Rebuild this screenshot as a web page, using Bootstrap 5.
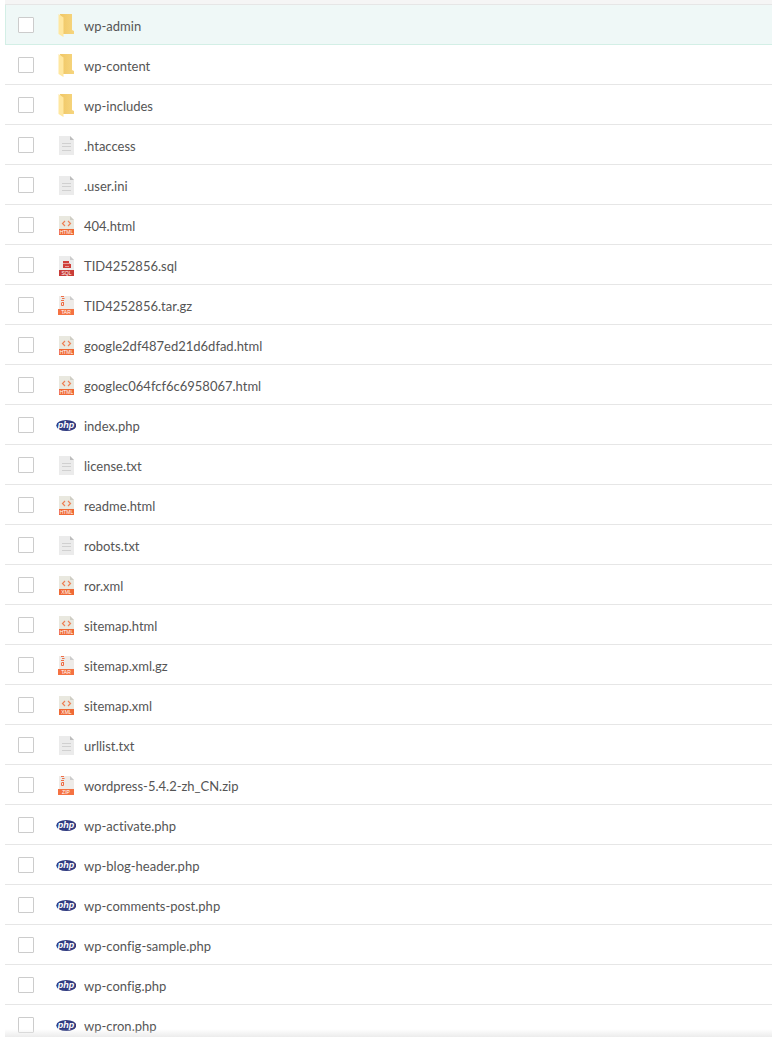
<!DOCTYPE html>
<html lang="en">
<head>
<meta charset="utf-8">
<meta name="viewport" content="width=device-width, initial-scale=1">
<title>Files</title>
<link href="https://cdn.jsdelivr.net/npm/bootstrap@5.3.0/dist/css/bootstrap.min.css" rel="stylesheet">
<style>
body{font-family:Lato,"Noto Sans CJK SC",sans-serif;font-size:13px;line-height:20px;font-variant-ligatures:none;color:#555;background:#fff}
.file-pane{margin-left:5px;max-height:calc(100vh - 11px)}
.pane-head{height:4px;background:#f5f5f5;margin-left:-5px}
.pane-fade{height:8px;background:linear-gradient(#fff0,#ececec)}
.file-list{border-top:1px solid #e6e6e6}
.file-row{height:40px;padding-left:13px;border-bottom:1px solid #e6e6e6}
.file-row.hovered{background:#eff8f7;border-bottom-color:#d3efe6;box-shadow:inset 1px 0 #d3efe6}
.file-row .form-check-input{width:16px;height:16px;margin:0 22px 0 0;border:1px solid #ccc;border-radius:1px;background-color:#fff;flex:none}
.file-row label{padding-top:2px}
.file-icon{width:20px;height:24px;margin-right:8px;flex:none}
.file-icon text{fill:#fff;text-anchor:middle;font-family:"Liberation Sans",sans-serif;font-size:5px}
.file-icon .php-word{font-size:9px;font-weight:700;font-style:italic}
</style>
</head>
<body>
<svg width="0" height="0" class="position-absolute" aria-hidden="true">
<defs><linearGradient id="gold"><stop offset="0" stop-color="#f0c766"/><stop offset="1" stop-color="#f6d57e"/></linearGradient></defs>
<symbol id="folder" viewBox="0 0 20 24"><path d="M4 1h12v16l2 1v3H6z" fill="url(#gold)"/><path d="M2.500 1 7.500 4.500V24l-5-3z" fill="#ffe7a0"/></symbol>
<symbol id="txt" viewBox="0 0 20 24"><path d="M3 3h11l4 4v15H3z" fill="#ebebeb"/><path d="M14 3v4h4z" fill="#bdbdbd"/><path d="M6 10.500h9M6 13.500h9M6 17.500h9" stroke="#d0d0d0"/></symbol>
<symbol id="code" viewBox="0 0 20 24"><path d="M3 3h11l4 4v10H3z" fill="#e9e8df"/><path d="M14 3v4h4z" fill="#cfcec5"/><path d="M9 8 6.500 10.500 9 13M12 8l2.500 2.500L12 13" fill="none" stroke="#ee8156" stroke-width="1.200"/><path d="M3 16h15v6H3z" fill="#f06a35"/></symbol>
<symbol id="sql" viewBox="0 0 20 24"><path d="M3 3h11l4 4v10H3z" fill="#ececec"/><path d="M14 3v4h4z" fill="#ccc"/><path d="M7 8h6v2H7zM7 11h8v4H7z" fill="#cf3e39"/><path d="M7 10.500h7M9 13.500h4" stroke="#e5a09c"/><path d="M3 17h15v6H3z" fill="#c93d38"/></symbol>
<symbol id="arch" viewBox="0 0 20 24"><path d="M3 3h11l4 4v10H3z" fill="#eeebe8"/><path d="M14 3v4h4z" fill="#ccc"/><path d="M5 3.500h3M6 5.500h2.500M5 7.500h3M6 9.500h2" stroke="#ef6f48" stroke-width="1.200"/><path d="M5.500 9.500v3h2v-3" fill="none" stroke="#ef6f48"/><path d="M2 16h16v6H2z" fill="#f57242"/></symbol>
<symbol id="php" viewBox="0 0 20 24"><ellipse cx="10.300" cy="12.500" rx="10" ry="5.500" fill="#303b80"/></symbol>
</svg>
<main class="file-pane position-relative overflow-hidden">
<div class="pane-head"></div>
<ul class="file-list list-unstyled mb-0">
<li class="file-row hovered d-flex align-items-center"><input class="form-check-input" type="checkbox" id="f1"><svg class="file-icon"><use href="#folder"/></svg><label for="f1">wp-admin</label></li>
<li class="file-row d-flex align-items-center"><input class="form-check-input" type="checkbox" id="f2"><svg class="file-icon"><use href="#folder"/></svg><label for="f2">wp-content</label></li>
<li class="file-row d-flex align-items-center"><input class="form-check-input" type="checkbox" id="f3"><svg class="file-icon"><use href="#folder"/></svg><label for="f3">wp-includes</label></li>
<li class="file-row d-flex align-items-center"><input class="form-check-input" type="checkbox" id="f4"><svg class="file-icon"><use href="#txt"/></svg><label for="f4">.htaccess</label></li>
<li class="file-row d-flex align-items-center"><input class="form-check-input" type="checkbox" id="f5"><svg class="file-icon"><use href="#txt"/></svg><label for="f5">.user.ini</label></li>
<li class="file-row d-flex align-items-center"><input class="form-check-input" type="checkbox" id="f6"><svg class="file-icon"><use href="#code"/><text x="10.500" y="21">HTML</text></svg><label for="f6">404.html</label></li>
<li class="file-row d-flex align-items-center"><input class="form-check-input" type="checkbox" id="f7"><svg class="file-icon"><use href="#sql"/><text x="10.500" y="22">SQL</text></svg><label for="f7">TID4252856.sql</label></li>
<li class="file-row d-flex align-items-center"><input class="form-check-input" type="checkbox" id="f8"><svg class="file-icon"><use href="#arch"/><text x="10" y="21">TAR</text></svg><label for="f8">TID4252856.tar.gz</label></li>
<li class="file-row d-flex align-items-center"><input class="form-check-input" type="checkbox" id="f9"><svg class="file-icon"><use href="#code"/><text x="10.500" y="21">HTML</text></svg><label for="f9">google2df487ed21d6dfad.html</label></li>
<li class="file-row d-flex align-items-center"><input class="form-check-input" type="checkbox" id="f10"><svg class="file-icon"><use href="#code"/><text x="10.500" y="21">HTML</text></svg><label for="f10">googlec064fcf6c6958067.html</label></li>
<li class="file-row d-flex align-items-center"><input class="form-check-input" type="checkbox" id="f11"><svg class="file-icon"><use href="#php"/><text class="php-word" x="10" y="15">php</text></svg><label for="f11">index.php</label></li>
<li class="file-row d-flex align-items-center"><input class="form-check-input" type="checkbox" id="f12"><svg class="file-icon"><use href="#txt"/></svg><label for="f12">license.txt</label></li>
<li class="file-row d-flex align-items-center"><input class="form-check-input" type="checkbox" id="f13"><svg class="file-icon"><use href="#code"/><text x="10.500" y="21">HTML</text></svg><label for="f13">readme.html</label></li>
<li class="file-row d-flex align-items-center"><input class="form-check-input" type="checkbox" id="f14"><svg class="file-icon"><use href="#txt"/></svg><label for="f14">robots.txt</label></li>
<li class="file-row d-flex align-items-center"><input class="form-check-input" type="checkbox" id="f15"><svg class="file-icon"><use href="#code"/><text x="10.500" y="21">XML</text></svg><label for="f15">ror.xml</label></li>
<li class="file-row d-flex align-items-center"><input class="form-check-input" type="checkbox" id="f16"><svg class="file-icon"><use href="#code"/><text x="10.500" y="21">HTML</text></svg><label for="f16">sitemap.html</label></li>
<li class="file-row d-flex align-items-center"><input class="form-check-input" type="checkbox" id="f17"><svg class="file-icon"><use href="#arch"/><text x="10" y="21">TAR</text></svg><label for="f17">sitemap.xml.gz</label></li>
<li class="file-row d-flex align-items-center"><input class="form-check-input" type="checkbox" id="f18"><svg class="file-icon"><use href="#code"/><text x="10.500" y="21">XML</text></svg><label for="f18">sitemap.xml</label></li>
<li class="file-row d-flex align-items-center"><input class="form-check-input" type="checkbox" id="f19"><svg class="file-icon"><use href="#txt"/></svg><label for="f19">urllist.txt</label></li>
<li class="file-row d-flex align-items-center"><input class="form-check-input" type="checkbox" id="f20"><svg class="file-icon"><use href="#arch"/><text x="10" y="21">ZIP</text></svg><label for="f20">wordpress-5.4.2-zh_CN.zip</label></li>
<li class="file-row d-flex align-items-center"><input class="form-check-input" type="checkbox" id="f21"><svg class="file-icon"><use href="#php"/><text class="php-word" x="10" y="15">php</text></svg><label for="f21">wp-activate.php</label></li>
<li class="file-row d-flex align-items-center"><input class="form-check-input" type="checkbox" id="f22"><svg class="file-icon"><use href="#php"/><text class="php-word" x="10" y="15">php</text></svg><label for="f22">wp-blog-header.php</label></li>
<li class="file-row d-flex align-items-center"><input class="form-check-input" type="checkbox" id="f23"><svg class="file-icon"><use href="#php"/><text class="php-word" x="10" y="15">php</text></svg><label for="f23">wp-comments-post.php</label></li>
<li class="file-row d-flex align-items-center"><input class="form-check-input" type="checkbox" id="f24"><svg class="file-icon"><use href="#php"/><text class="php-word" x="10" y="15">php</text></svg><label for="f24">wp-config-sample.php</label></li>
<li class="file-row d-flex align-items-center"><input class="form-check-input" type="checkbox" id="f25"><svg class="file-icon"><use href="#php"/><text class="php-word" x="10" y="15">php</text></svg><label for="f25">wp-config.php</label></li>
<li class="file-row d-flex align-items-center"><input class="form-check-input" type="checkbox" id="f26"><svg class="file-icon"><use href="#php"/><text class="php-word" x="10" y="15">php</text></svg><label for="f26">wp-cron.php</label></li>
</ul>
<div class="pane-fade position-absolute bottom-0 start-0 end-0"></div>
</main>
<script src="https://cdn.jsdelivr.net/npm/bootstrap@5.3.0/dist/js/bootstrap.bundle.min.js"></script>
</body>
</html>
